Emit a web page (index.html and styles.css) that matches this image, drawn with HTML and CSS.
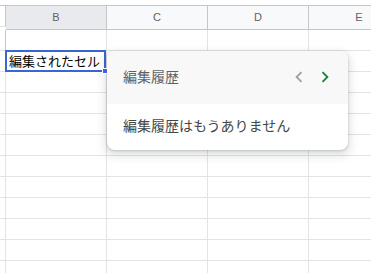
FILE: index.html
```html
<!DOCTYPE html>
<html lang="ja">
<head>
	<meta charset="UTF-8">
	<title>編集履歴</title>
	<link rel="stylesheet" href="styles.css">
</head>
<body>

	<div id="viewport">
		<div id="sheet">
			<div class="corner"></div>
			<div class="corner"></div>
			<div class="corner"></div>
			<div class="corner"></div>
			<div class="corner"></div>

			<div class="rowhead"></div>
			<div class="colhead active">B</div>
			<div class="colhead">C</div>
			<div class="colhead">D</div>
			<div class="colhead">E</div>

			<div class="rowhead"></div>
			<div class="cell"></div>
			<div class="cell"></div>
			<div class="cell"></div>
			<div class="cell"></div>

			<div class="rowhead"></div>
			<div class="cell selected">編集されたセル<span class="handle"></span></div>
			<div class="cell"></div>
			<div class="cell"></div>
			<div class="cell"></div>
		</div>
		<div id="rows"></div>
	</div>

	<div id="history">
		<div class="history-head">
			<span>編集履歴</span>
			<div class="history-nav">
				<svg class="prev" width="22" height="22" viewBox="0 0 24 24"><path d="M15.41 7.41L14 6l-6 6 6 6 1.41-1.41L10.83 12z"/></svg>
				<svg class="next" width="22" height="22" viewBox="0 0 24 24"><path d="M10 6L8.59 7.41 13.17 12l-4.58 4.59L10 18l6-6z"/></svg>
			</div>
		</div>
		<div class="history-body">編集履歴はもうありません</div>
	</div>

	<script>
	// fill the rest of the grid with empty rows
	var rows = document.querySelector('#rows');
	for (var i = 0; i < 10; i++) {
		var row = document.createElement('div');
		row.className = 'row';
		for (var j = 0; j < 5; j++) {
			var c = document.createElement('div');
			c.className = j == 0 ? 'rowhead' : 'cell';
			row.appendChild(c);
		}
		rows.appendChild(row);
	}
	</script>
</body>
</html>
```

FILE: styles.css
```css
body {
	background: #fff;
	font-family: "Noto Sans CJK JP", "Liberation Sans", sans-serif;
	margin: 0;
	overflow: hidden;
	position: relative;
	height: 273px;
}
#viewport {
	height: 273px;
	overflow: hidden;
	width: 100%;
}
#sheet,
#rows .row {
	display: grid;
	grid-template-columns: 6px repeat(4, 101px);
	width: 410px;
}
#sheet > div,
#rows .row > div {
	box-sizing: border-box;
	border-right: 1px solid #e2e3e3;
	border-bottom: 1px solid #e2e3e3;
	height: 21px;
}
#sheet .corner {
	border-right: 0;
	border-bottom: 1px solid #c4c7c5;
	height: 6px;
}
#sheet .rowhead,
#rows .rowhead {
	border-right: 1px solid #c4c7c5;
}
#sheet .colhead {
	background: #f8f9fa;
	border-right: 1px solid #c4c7c5;
	border-bottom: 1px solid #c4c7c5;
	color: #5f6368;
	font-family: "Liberation Sans", Arial, sans-serif;
	font-size: 11px;
	height: 24px;
	line-height: 23px;
	text-align: center;
}
#sheet .colhead.active {
	background: #e8eaed;
}
#sheet .selected {
	color: #000;
	font-size: 13px;
	line-height: 19px;
	padding-left: 3px;
	position: relative;
	white-space: nowrap;
}
#sheet .selected::after {
	border: 2px solid #3a66d4;
	content: "";
	left: -1px;
	top: -1px;
	right: 0;
	bottom: -1px;
	position: absolute;
}
#sheet .handle {
	background: #3a66d4;
	border: 1px solid #fff;
	bottom: -3px;
	height: 4px;
	position: absolute;
	right: -2px;
	width: 4px;
	z-index: 1;
}

#history {
	background: #fff;
	border-radius: 8px;
	box-shadow: 0 1px 3px rgba(60,64,67,.25), 0 4px 8px 3px rgba(60,64,67,.12);
	left: 107px;
	overflow: hidden;
	position: absolute;
	top: 51px;
	width: 241px;
}
.history-head {
	align-items: center;
	background: #f8f8f8;
	box-sizing: border-box;
	color: #5f6368;
	display: flex;
	font-size: 14px;
	height: 53px;
	justify-content: space-between;
	padding: 0 12px 4px 16px;
}
.history-nav {
	display: flex;
	gap: 4px;
	margin-top: 3px;
}
.history-nav .prev {
	fill: #9aa0a6;
}
.history-nav .next {
	fill: #188038;
}
.history-body {
	color: #444746;
	font-size: 14px;
	height: 46px;
	line-height: 42px;
	padding-left: 16px;
}
```
